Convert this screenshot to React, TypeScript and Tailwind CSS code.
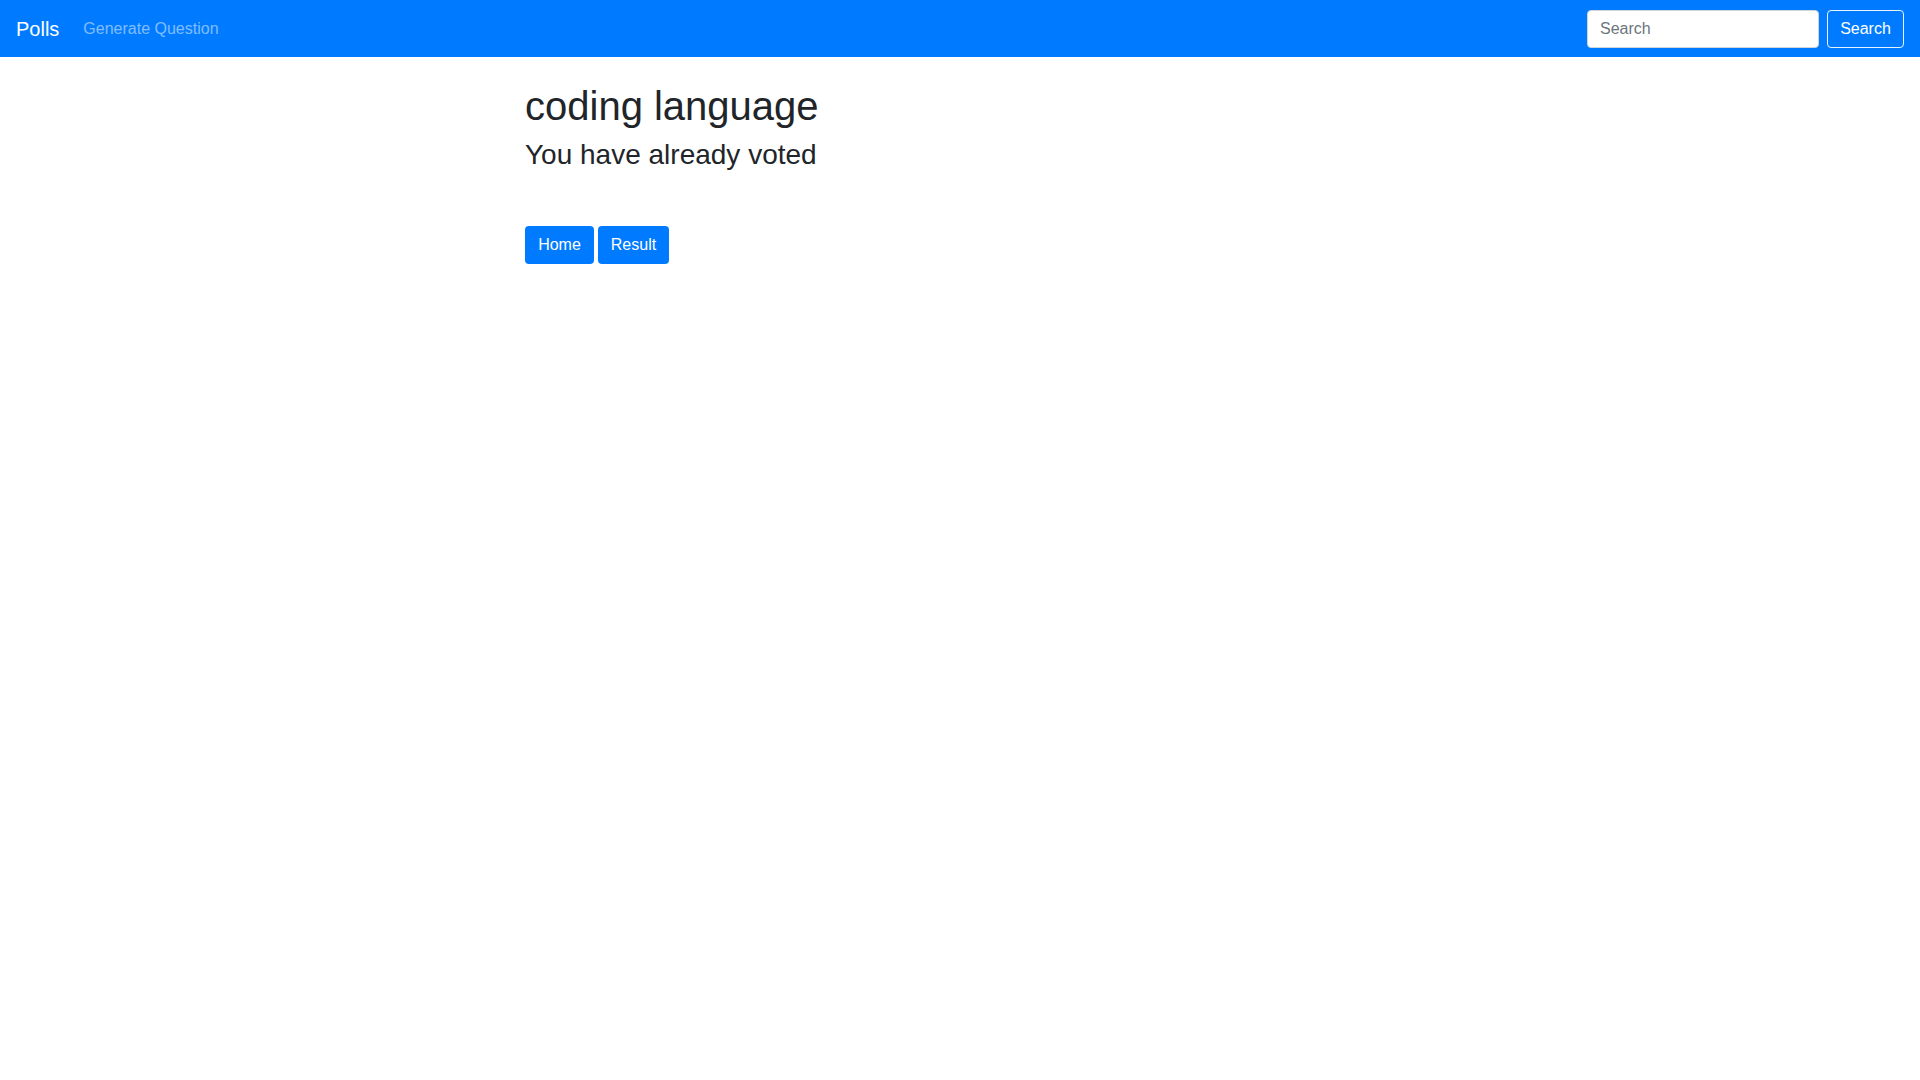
import React from "react";

export default function App() {
  return (
    <div className="min-h-screen bg-white text-[#212529]" style={{ fontFamily: '"Liberation Sans", Arial, sans-serif' }}>
      <nav className="flex h-[57px] items-center justify-between bg-[#007bff] px-4 pt-px">
        <div className="flex items-center">
          <a className="mr-4 text-[20px] leading-[30px] text-white">Polls</a>
          <a className="px-2 text-[16px] leading-6 text-white/50">Generate Question</a>
        </div>
        <form className="flex items-center" onSubmit={(e) => e.preventDefault()}>
          <input
            placeholder="Search"
            className="mr-2 h-[38px] w-[232px] rounded-[4px] border border-[#ced4da] bg-white px-3 text-[16px] text-[#495057] placeholder-[#6c757d] outline-none"
          />
          <button className="h-[38px] w-[77px] rounded-[4px] border border-white/90 text-[16px] text-white">Search</button>
        </form>
      </nav>
      <div className="pl-[525px] pt-[25px]">
        <h1 className="mb-2 text-[40px] font-medium leading-[48px]">coding language</h1>
        <h3 className="mb-2 text-[28px] font-medium leading-[33.6px]">You have already voted</h3>
        <div className="mt-[54px] flex gap-[4px]">
          <button className="h-[38px] w-[69px] rounded-[4px] bg-[#007bff] text-[16px] text-white">Home</button>
          <button className="h-[38px] w-[71px] rounded-[4px] bg-[#007bff] text-[16px] text-white">Result</button>
        </div>
      </div>
    </div>
  );
}
